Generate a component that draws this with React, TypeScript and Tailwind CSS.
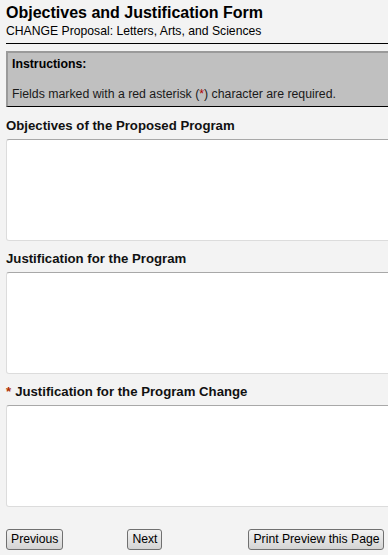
import React from 'react';

const fields = [
  { label: 'Objectives of the Proposed Program', required: false },
  { label: 'Justification for the Program', required: false },
  { label: 'Justification for the Program Change', required: true },
];

function Button({ children, className = '' }: { children: React.ReactNode; className?: string }) {
  return (
    <button
      className={`h-[21px] px-[4px] whitespace-nowrap rounded-[3px] border border-[#707070] bg-gradient-to-b from-[#f2f2f2] to-[#d4d4d4] text-[12.2px] leading-none text-black ${className}`}
    >
      {children}
    </button>
  );
}

export default function App() {
  return (
    <div
      className="w-[388px] h-[555px] overflow-hidden bg-[#f3f3f3] text-black"
      style={{ fontFamily: '"Liberation Sans", Arial, sans-serif' }}
    >
      <div className="pl-[6px] pt-[3px]">
        <h1 className="text-[16px] font-bold leading-[19px]">Objectives and Justification Form</h1>
        <p className="text-[12.2px] leading-[14px] mt-[2px]">CHANGE Proposal: Letters, Arts, and Sciences</p>
        <div className="mt-[5px] h-[1px] bg-black" />

        {/* instructions */}
        <div className="mt-[7px] h-[56px] bg-[#c0c0c0] border-t-2 border-l-2 border-b border-t-[#9a9a9a] border-l-[#9a9a9a] border-b-black pl-[4px] pt-[4px] text-[12.3px]">
          <div className="font-bold leading-[14px]">Instructions:</div>
          <div className="mt-[16px] leading-[14px] text-[#1a1a1a]">
            Fields marked with a red asterisk (<span className="text-[#b00000]">*</span>) character are required.
          </div>
        </div>

        {fields.map((f, i) => (
          <div key={i} className={i === 0 ? 'mt-[11px]' : 'mt-[10px]'}>
            <div className="text-[13.2px] font-bold leading-[16px] text-[#111]">
              {f.required && <span className="text-[#b03000] mr-[4px]">*</span>}
              {f.label}
            </div>
            <textarea className="block mt-[5px] w-[390px] h-[102px] bg-white rounded-[3px] border border-[#dcdcdc] border-t-[#a8a8a8] resize-none outline-none" />
          </div>
        ))}

        <div className="mt-[22px] flex items-center">
          <Button>Previous</Button>
          <Button className="ml-[64px]">Next</Button>
          <Button className="ml-[86px]">Print Preview this Page</Button>
        </div>
      </div>
    </div>
  );
}
